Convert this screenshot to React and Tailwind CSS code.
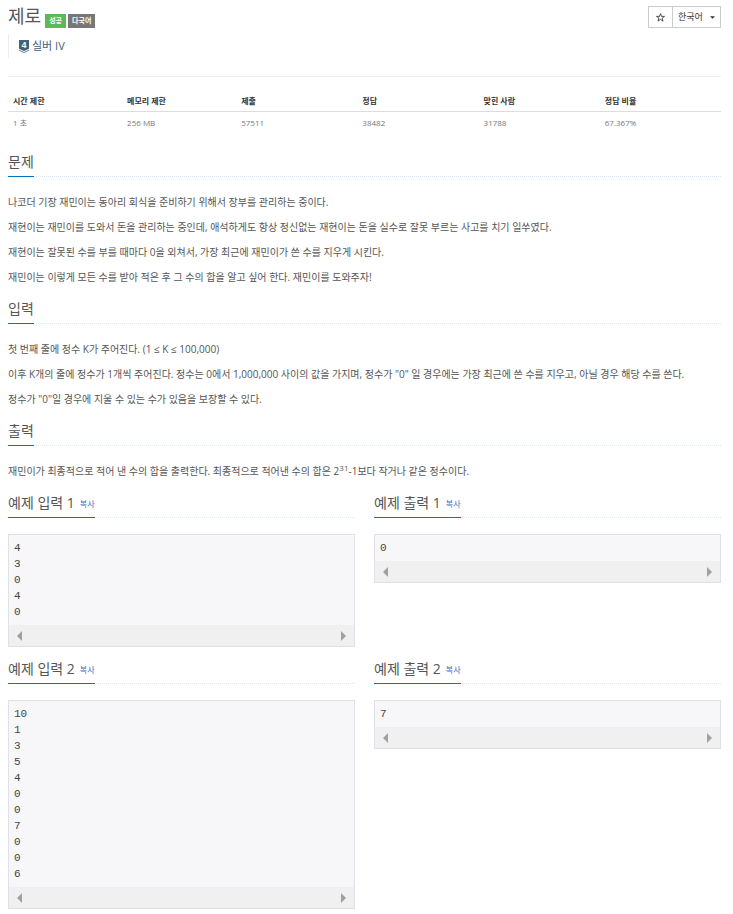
import React, { useState } from 'react'

const stats = [
  { label: '시간 제한', value: '1 초', width: 'w-[16%]' },
  { label: '메모리 제한', value: '256 MB', width: 'w-[16%]' },
  { label: '제출', value: '57511', width: 'w-[17%]' },
  { label: '정답', value: '38482', width: 'w-[17%]' },
  { label: '맞힌 사람', value: '31788', width: 'w-[17%]' },
  { label: '정답 비율', value: '67.367%', width: 'w-[17%]' },
]

const samples = [
  { no: 1, input: '4\n3\n0\n4\n0', output: '0' },
  { no: 2, input: '10\n1\n3\n5\n4\n0\n0\n7\n0\n0\n6', output: '7' },
]

export default function App() {
  const [starred, setStarred] = useState(false)

  return (
    <main className="bg-white pt-1 pb-1 pl-2 pr-3 font-['Open_Sans','Noto_Sans_CJK_KR',sans-serif] text-[10px] text-[#555]">
      <header className="flex items-end justify-between">
        <div className="flex items-end">
          <h1 className="mr-1 text-[18px] leading-6">제로</h1>
          <span className="mr-0.5 bg-[#5cb85c] px-1 text-[7px] leading-[14px] font-bold text-white">성공</span>
          <span className="bg-[#777] px-1 text-[7px] leading-[14px] font-bold text-white">다국어</span>
        </div>

        <div className="flex text-[#333]">
          <button
            type="button"
            aria-label="즐겨찾기"
            aria-pressed={starred}
            onClick={() => setStarred(!starred)}
            className="flex h-[22px] w-[25px] items-center justify-center border border-[#ccc]"
          >
            <svg viewBox="0 0 16 16" className="h-[9px] w-[9px]" fill={starred ? 'currentColor' : 'none'} stroke="currentColor" strokeWidth="1.5">
              <path d="M8 1.200 9.800 6h5.300l-4.200 3.200 1.600 5.200L8 11.300l-4.500 3.100 1.600-5.200L.9 6h5.300z" />
            </svg>
          </button>
          <div className="relative">
            <select
              aria-label="언어"
              className="h-[22px] appearance-none border border-l-0 border-[#ccc] bg-white pr-[17px] pl-[5px] text-[9px] leading-5"
            >
              <option>한국어</option>
            </select>
            <svg viewBox="0 0 6 3" className="pointer-events-none absolute top-[10px] right-[6px] h-[3px] w-[5px]" fill="currentColor">
              <path d="M0 0h6L3 3z" />
            </svg>
          </div>
        </div>
      </header>

      <div className="mt-[6px] flex h-6 items-center border-l border-[#eee] pl-[10px]">
        <a href="#tier" className="flex items-center gap-[3px] text-[11px] leading-6 text-[#435f7a]">
          <TierIcon />
          실버 IV
        </a>
      </div>
      <hr className="mt-[18px] border-[#eee]" />

      <table className="mt-[14px] w-full table-fixed text-left text-[8px]">
        <thead>
          <tr className="border-b border-[#ddd] text-[#333]">
            {stats.map((s) => (
              <th key={s.label} className={`${s.width} h-5 px-[5px] leading-5 font-bold`}>{s.label}</th>
            ))}
          </tr>
        </thead>
        <tbody>
          <tr className="text-[#777]">
            {stats.map((s) => (
              <td key={s.label} className="h-[22px] px-[5px] leading-[22px]">{s.value}</td>
            ))}
          </tr>
        </tbody>
      </table>

      <div className="mt-[19px] flex flex-col gap-[7px]">
        <Section title="문제">
          <p>나코더 기장 재민이는 동아리 회식을 준비하기 위해서 장부를 관리하는 중이다.</p>
          <p>재현이는 재민이를 도와서 돈을 관리하는 중인데, 애석하게도 항상 정신없는 재현이는 돈을 실수로 잘못 부르는 사고를 치기 일쑤였다.</p>
          <p>재현이는 잘못된 수를 부를 때마다 0을 외쳐서, 가장 최근에 재민이가 쓴 수를 지우게 시킨다.</p>
          <p>재민이는 이렇게 모든 수를 받아 적은 후 그 수의 합을 알고 싶어 한다. 재민이를 도와주자!</p>
        </Section>

        <Section title="입력">
          <p>첫 번째 줄에 정수 K가 주어진다. (1 ≤ K ≤ 100,000)</p>
          <p>이후 K개의 줄에 정수가 1개씩 주어진다. 정수는 0에서 1,000,000 사이의 값을 가지며, 정수가 "0" 일 경우에는 가장 최근에 쓴 수를 지우고, 아닐 경우 해당 수를 쓴다.</p>
          <p>정수가 "0"일 경우에 지울 수 있는 수가 있음을 보장할 수 있다.</p>
        </Section>

        <Section title="출력">
          <p>
            재민이가 최종적으로 적어 낸 수의 합을 출력한다. 최종적으로 적어낸 수의 합은 2<sup className="text-[8px]">31</sup>-1보다 작거나 같은 정수이다.
          </p>
        </Section>

        <div className="flex flex-col gap-[13px]">
          {samples.map((s) => (
            <div key={s.no} className="grid grid-cols-2 items-start gap-[19px]">
              <Sample title={`예제 입력 ${s.no}`} text={s.input} />
              <Sample title={`예제 출력 ${s.no}`} text={s.output} />
            </div>
          ))}
        </div>
      </div>
    </main>
  )
}

function Heading({ children }) {
  return (
    <div className="mb-4 flex border-b border-dotted border-[#dfe5ee]">
      <div className="-mb-px flex items-end gap-[5px] border-b border-[#0076c0] pb-[5px]">{children}</div>
    </div>
  )
}

function Section({ title, children }) {
  return (
    <section>
      <Heading>
        <h2 className="text-[14px] leading-[18px]">{title}</h2>
      </Heading>
      <div className="flex flex-col gap-[7px] pb-[7px] leading-[18px]">{children}</div>
    </section>
  )
}

function Sample({ title, text }) {
  function handleCopy() {
    navigator.clipboard?.writeText(text)
  }

  return (
    <section className="min-w-0">
      <Heading>
        <h2 className="text-[14px] leading-[18px]">{title}</h2>
        <button type="button" onClick={handleCopy} className="cursor-pointer text-[8px] leading-4 text-[#3a6fc4]">
          복사
        </button>
      </Heading>
      <div className="border border-[#e0e1e8] bg-[#f7f7f9]">
        <pre className="overflow-hidden p-[5px] font-['Liberation_Mono',monospace] text-[11px] leading-4 text-[#444]">{text}</pre>
        <div className="flex h-[21px] items-center justify-between bg-[#f0f0f0] px-2">
          <svg viewBox="0 0 5 10" className="h-[10px] w-[5px]" fill="#a0a0a0">
            <path d="M5 0v10L0 5z" />
          </svg>
          <svg viewBox="0 0 5 10" className="h-[10px] w-[5px]" fill="#a0a0a0">
            <path d="M0 0v10l5-5z" />
          </svg>
        </div>
      </div>
    </section>
  )
}

// Silver tier shield: number plate with two chevrons underneath
function TierIcon() {
  return (
    <svg viewBox="0 0 10 14" className="h-[14px] w-[10px] overflow-visible">
      <path d="M0 1h10v8.800L5 12 0 9.800z" fill="#435f7a" />
      <path d="M0 11.200l5 2.200 5-2.200" fill="none" stroke="#435f7a" strokeWidth="0.8" />
      <text x="5" y="9" textAnchor="middle" fontSize="9" fontWeight="700" fill="#fff" className="font-['Liberation_Sans',sans-serif]">4</text>
    </svg>
  )
}
